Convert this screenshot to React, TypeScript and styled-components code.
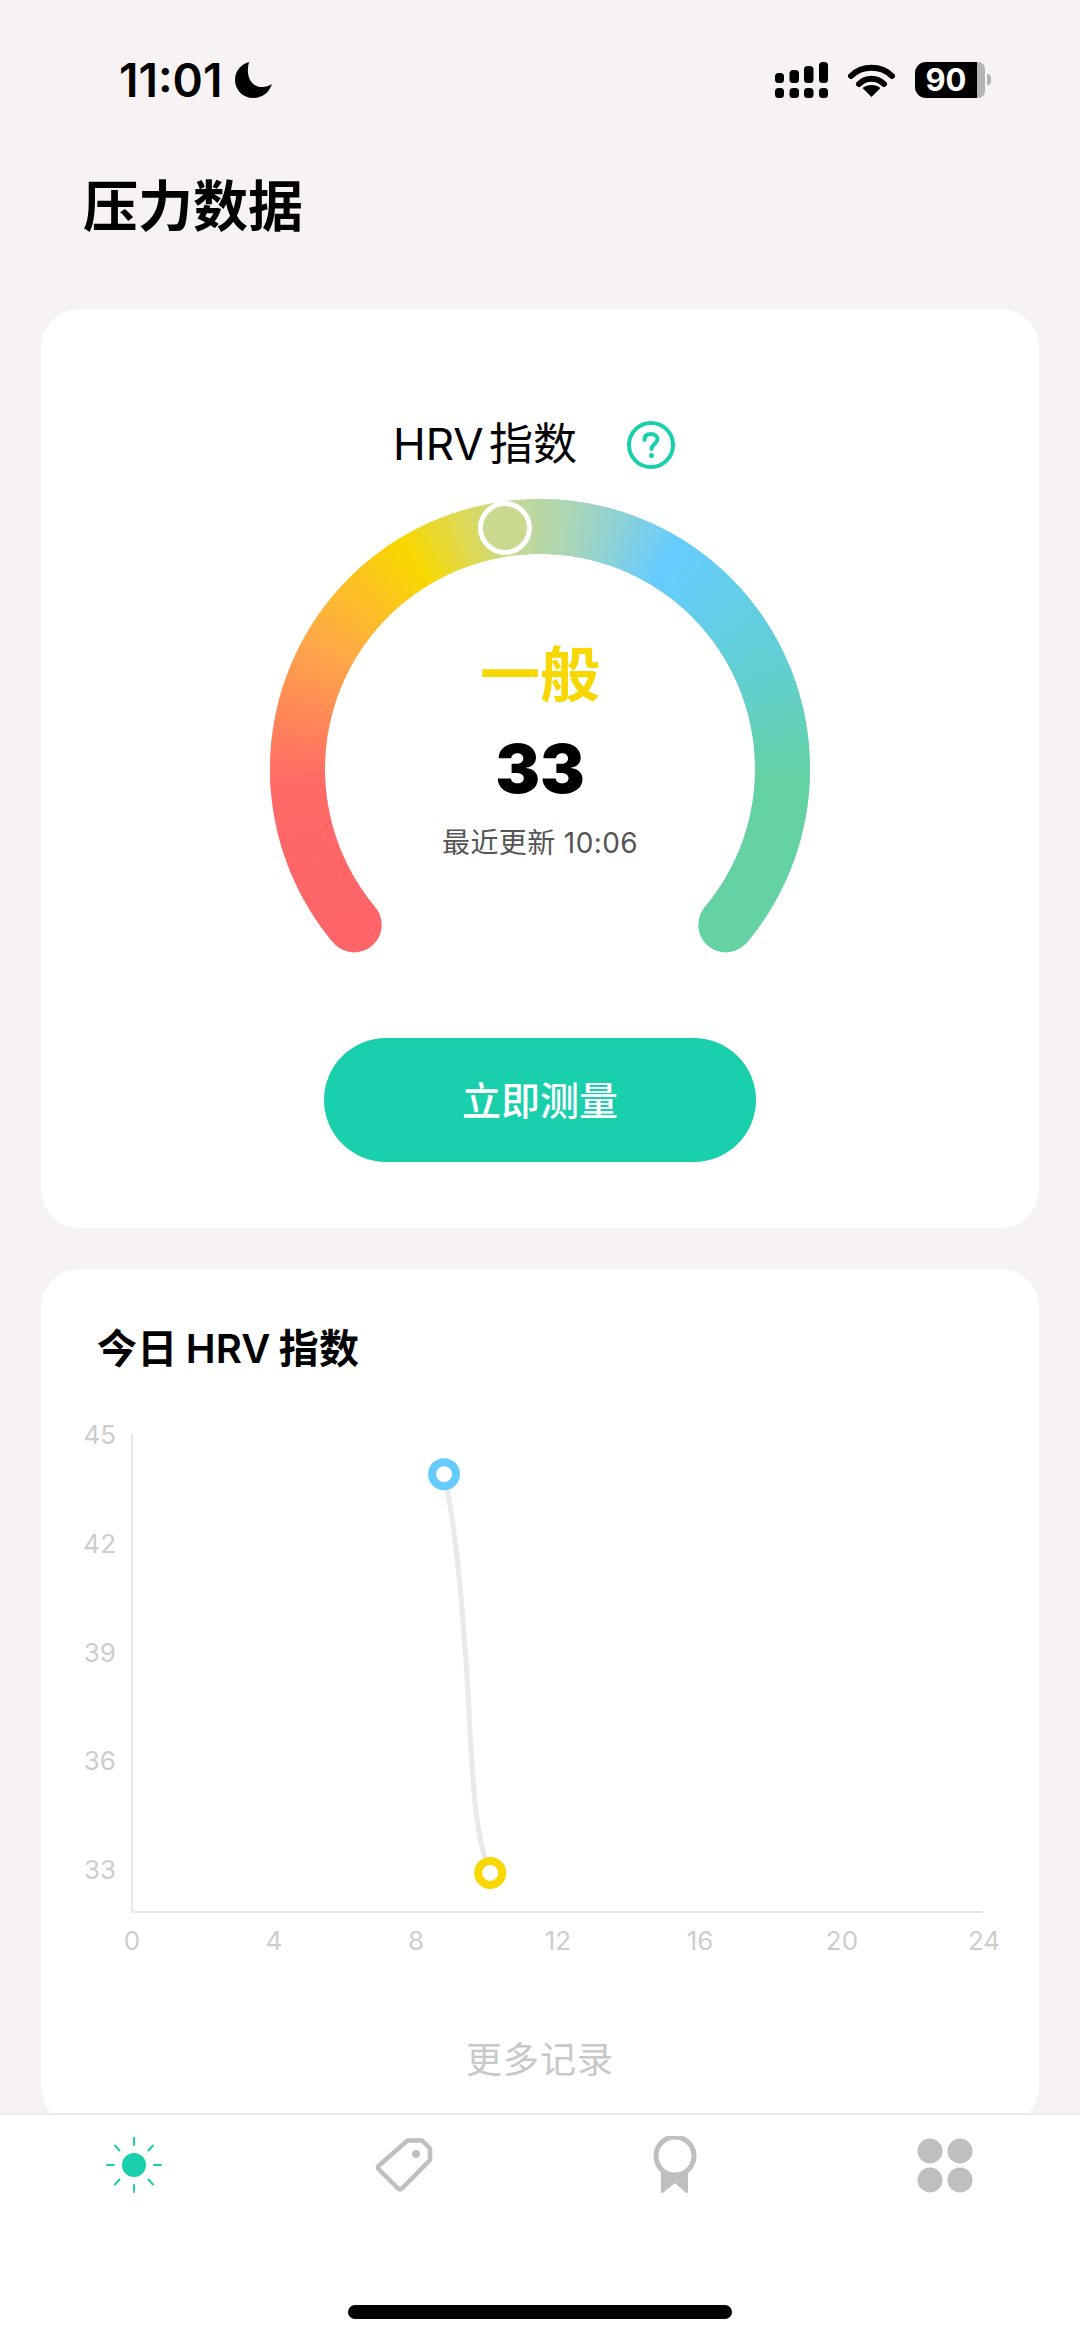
import React, { useMemo } from "react";
import styled, { createGlobalStyle } from "styled-components";

const FONT = `Inter, "Noto Sans CJK SC", "Noto Sans", sans-serif`;
const GREEN = "#1ACFAC";
const GREY = "#BFBFBF";

const GlobalStyle = createGlobalStyle`
  html, body {
    margin: 0;
    padding: 0;
    background: #f7f3f2;
  }
  body {
    font-family: ${FONT};
  }
`;

const Page = styled.div`
  width: 1080px;
  height: 2341px;
  display: flex;
  flex-direction: column;
  overflow: hidden;
  background: #f7f3f2;
`;

const Content = styled.main`
  height: 2113px;
  flex: none;
  overflow: hidden;
`;

// Status bar
const StatusBar = styled.div`
  height: 36px;
  padding: 62px 95px 0 119px;
  display: flex;
  align-items: center;
  justify-content: space-between;
`;

const Clock = styled.div`
  display: flex;
  align-items: center;
  gap: 13px;
`;

const Time = styled.span`
  font-size: 46px;
  font-weight: 600;
  line-height: 36px;
  color: #000;
`;

const StatusIcons = styled.div`
  display: flex;
  align-items: center;
`;

const Battery = styled.div`
  width: 70px;
  height: 36px;
  margin-left: 20px;
  border-radius: 11px 7px 7px 11px;
  background: linear-gradient(90deg, #000 89%, #b4b4b4 89%);
  color: #fff;
  font-size: 31px;
  font-weight: 700;
  line-height: 36px;
  text-align: center;
  padding-right: 8px;
  box-sizing: border-box;
  position: relative;

  &::after {
    content: "";
    position: absolute;
    right: -6px;
    top: 12px;
    width: 4px;
    height: 11px;
    border-radius: 0 4px 4px 0;
    background: #b4b4b4;
  }
`;

const Title = styled.h1`
  margin: 68px 0 0;
  padding-left: 83px;
  font-size: 55px;
  line-height: 80px;
  font-weight: 700;
  color: #000;
`;

const Card = styled.section`
  margin: 0 41px;
  background: #fff;
  border-radius: 38px;
`;

// Gauge card
const GaugeCard = styled(Card)`
  margin-top: 63px;
  padding: 108px 0 66px;
  display: flex;
  flex-direction: column;
  align-items: center;
`;

const GaugeHeader = styled.div`
  height: 56px;
  display: flex;
  align-items: center;
  gap: 50px;
  padding-right: 12px;
`;

const GaugeTitle = styled.span`
  font-size: 44px;
  font-weight: 400;
  line-height: 50px;
  word-spacing: -7px;
  margin-top: -2px;
  color: #000;
`;

const Gauge = styled.div`
  position: relative;
  width: 540px;
  height: 454px;
  margin-top: 26px;
`;

const GaugeText = styled.div`
  position: absolute;
  inset: 0;
  padding-top: 141px;
  display: flex;
  flex-direction: column;
  align-items: center;
`;

const Level = styled.div`
  font-size: 60px;
  line-height: 70px;
  font-weight: 700;
  color: #f8d800;
`;

const Score = styled.div`
  margin-top: 24px;
  font-size: 67px;
  line-height: 70px;
  font-weight: 900;
  color: #000;
`;

const Updated = styled.div`
  margin-top: 21px;
  font-size: 28px;
  line-height: 36px;
  letter-spacing: 0.4px;
  color: #555;
`;

const MeasureButton = styled.button`
  width: 432px;
  height: 124px;
  margin-top: 85px;
  padding: 0 0 4px;
  border: 0;
  border-radius: 62px;
  background: ${GREEN};
  color: #fff;
  font-family: ${FONT};
  font-size: 39px;
  font-weight: 500;
`;

// Trend card
const TrendCard = styled(Card)`
  margin-top: 41px;
  padding: 60px 0 40px;
`;

const TrendTitle = styled.h2`
  margin: 0;
  padding-left: 56px;
  font-size: 40px;
  line-height: 40px;
  font-weight: 600;
  word-spacing: -2px;
  letter-spacing: 0.2px;
  color: #000;
`;

const ChartSvg = styled.svg`
  display: block;
  margin-top: 51px;
`;

const AxisLabel = styled.text`
  font-family: ${FONT};
  font-size: 26px;
  fill: #cdcdcd;
`;

const MoreLink = styled.div`
  margin-top: 75px;
  font-size: 36px;
  line-height: 50px;
  text-align: center;
  letter-spacing: 1px;
  color: #c8c8c8;
`;

// Bottom navigation
const TabBar = styled.nav`
  flex: 1;
  background: #fff;
  border-top: 2px solid #ebebeb;
  display: flex;
  flex-direction: column;
  align-items: center;
`;

const Tabs = styled.div`
  width: 100%;
  padding-top: 21px;
  display: grid;
  grid-template-columns: repeat(4, 1fr);
  justify-items: center;
`;

const TabIcon = styled.svg`
  display: block;
  width: 60px;
  height: 60px;
`;

const HomeIndicator = styled.div`
  width: 384px;
  height: 14px;
  margin-top: auto;
  margin-bottom: 22px;
  border-radius: 7px;
  background: #000;
`;

// Colour stops along the gauge, in degrees clockwise from the top
const GAUGE_STOPS: [number, string][] = [
  [-131, "#ff6568"],
  [-93, "#ff6a66"],
  [-60, "#ffa948"],
  [-31, "#f8d800"],
  [-8, "#c9d98f"],
  [8, "#a8d5b8"],
  [31, "#66ccff"],
  [67, "#62cfd0"],
  [93, "#64d2a2"],
  [131, "#64d2a2"],
];

const hexToRgb = (hex: string) => [
  parseInt(hex.slice(1, 3), 16),
  parseInt(hex.slice(3, 5), 16),
  parseInt(hex.slice(5, 7), 16),
];

const colorAt = (angle: number) => {
  const next = GAUGE_STOPS.findIndex(([a]) => a >= angle);
  if (next <= 0) return GAUGE_STOPS[0][1];
  const [a0, c0] = GAUGE_STOPS[next - 1];
  const [a1, c1] = GAUGE_STOPS[next];
  const t = (angle - a0) / (a1 - a0);
  const from = hexToRgb(c0);
  const to = hexToRgb(c1);
  const mix = from.map((v, i) => Math.round(v + (to[i] - v) * t));
  return `rgb(${mix.join(",")})`;
};

const GAUGE_R = 242.5;
const polar = (angle: number) => {
  const rad = (angle * Math.PI) / 180;
  return { x: 270 + GAUGE_R * Math.sin(rad), y: 270 - GAUGE_R * Math.cos(rad) };
};

const GaugeArc = () => {
  const segments = useMemo(() => {
    const list = [];
    for (let a = -130; a < 130; a += 1) {
      const p0 = polar(a);
      const p1 = polar(a + 1.4);
      list.push({
        key: a,
        d: `M${p0.x} ${p0.y}A${GAUGE_R} ${GAUGE_R} 0 0 1 ${p1.x} ${p1.y}`,
        color: colorAt(a + 0.5),
      });
    }
    return list;
  }, []);
  const start = polar(-130);
  const end = polar(130);

  return (
    <svg width="540" height="454" viewBox="0 0 540 454" style={{ display: "block" }}>
      <circle cx={start.x} cy={start.y} r="27.5" fill={colorAt(-130)} />
      <circle cx={end.x} cy={end.y} r="27.5" fill={colorAt(130)} />
      {segments.map((s) => (
        <path key={s.key} d={s.d} fill="none" stroke={s.color} strokeWidth="55" />
      ))}
      <circle cx="235" cy="29" r="24.5" fill="#c9d98f" stroke="#fff" strokeWidth="5" />
    </svg>
  );
};

// Hours on x, HRV on y; pixel scale of the chart drawing
const xOf = (hour: number) => 91 + hour * 35.5;
const yOf = (value: number) => 450 - (value - 33) * 36.25;

const Y_TICKS = [45, 42, 39, 36, 33];
const X_TICKS = [0, 4, 8, 12, 16, 20, 24];
const POINTS = [
  { hour: 8.79, value: 43.92, color: "#66ccff" },
  { hour: 10.09, value: 32.92, color: "#f8d800" },
];

const TrendChart = () => (
  <ChartSvg width="998" height="540" viewBox="0 0 998 540">
    <path d="M91 14V492H942" fill="none" stroke="#e8e8e8" strokeWidth="2" />
    {Y_TICKS.map((v) => (
      <AxisLabel key={v} x="75" y={yOf(v) + 9} textAnchor="end">
        {v}
      </AxisLabel>
    ))}
    {X_TICKS.map((h) => (
      <AxisLabel key={h} x={xOf(h)} y="530" textAnchor="middle">
        {h}
      </AxisLabel>
    ))}
    <path
      d="M403 54C416 110 423 200 428 290C432 370 435 420 449 452"
      fill="none"
      stroke="#e9e9e9"
      strokeWidth="5"
    />
    {POINTS.map((p) => (
      <circle
        key={p.hour}
        cx={xOf(p.hour)}
        cy={yOf(p.value)}
        r="12"
        fill="#fff"
        stroke={p.color}
        strokeWidth="8"
      />
    ))}
  </ChartSvg>
);

const SunIcon = () => (
  <TabIcon viewBox="0 0 60 60">
    <circle cx="29" cy="29" r="12" fill={GREEN} />
    <g stroke={GREEN} strokeWidth="2" strokeLinecap="round">
      <path d="M29 2v7M29 49v7M2 29h7M49 29h7" />
      <path d="M10 9.5l4.5 5M48 9.5l-4.5 5M10 48.5l4.5-5M48 48.5l-4.5-5" />
    </g>
  </TabIcon>
);

const TagIcon = () => (
  <TabIcon viewBox="0 0 60 60">
    <path
      d="M32.5 4.5H47L55 12.500V24L27 52.500Q25 54.500 23 52.500L4 33.500Q2 31.500 4 29.500Z"
      fill="none"
      stroke={GREY}
      strokeWidth="4.500"
      strokeLinejoin="round"
    />
    <circle cx="41" cy="18" r="4" fill={GREY} />
  </TabIcon>
);

const MedalIcon = () => (
  <TabIcon viewBox="0 0 60 60">
    <path d="M16 32H43V56Q42 58 40 56L30 47L19 56Q17 58 16 56Z" fill={GREY} />
    <circle cx="30" cy="20" r="19" fill="#fff" stroke={GREY} strokeWidth="5" />
  </TabIcon>
);

const GridIcon = () => (
  <TabIcon viewBox="0 0 60 60">
    <g fill={GREY}>
      <circle cx="15" cy="15" r="12.500" />
      <circle cx="45" cy="15" r="12.500" />
      <circle cx="15" cy="44" r="12.500" />
      <circle cx="45" cy="44" r="12.500" />
    </g>
  </TabIcon>
);

const MoonIcon = () => (
  <svg width="37" height="36" viewBox="0 0 37 36">
    <path d="M14 0C7 2 0 8 0 18C0 28 8 36 18 36C27 36 34 31 37 22C34 24 31 25 27 25C17 25 10 15 14 0Z" fill="#000" />
  </svg>
);

const SignalIcon = () => (
  <svg width="53" height="36" viewBox="0 0 53 36">
    <g fill="#000">
      <rect x="0" y="11" width="9" height="10" rx="3.500" />
      <rect x="14.500" y="8" width="9.500" height="13" rx="3.500" />
      <rect x="29" y="4" width="9.500" height="17" rx="3.500" />
      <rect x="44" y="0" width="9" height="21" rx="3.500" />
      <rect x="0" y="26" width="9" height="10" rx="3.500" />
      <rect x="14.500" y="26" width="9.500" height="10" rx="3.500" />
      <rect x="29" y="26" width="9.500" height="10" rx="3.500" />
      <rect x="44" y="26" width="9" height="10" rx="3.500" />
    </g>
  </svg>
);

const WifiIcon = () => (
  <svg width="47" height="36" viewBox="0 0 47 36" style={{ marginLeft: 20 }}>
    <path d="M3 14C14 3 33 3 44 14" fill="none" stroke="#000" strokeWidth="6" strokeLinecap="round" />
    <path d="M11 22C18 15 29 15 36 22" fill="none" stroke="#000" strokeWidth="6" strokeLinecap="round" />
    <path d="M23.500 35L14.500 26C19 22 28 22 32.500 26Z" fill="#000" />
  </svg>
);

const QuestionIcon = () => (
  <svg width="48" height="48" viewBox="0 0 48 48">
    <circle cx="24" cy="24" r="22" fill="none" stroke={GREEN} strokeWidth="4" />
    <path
      d="M17.500 19C17.500 15 20 13 24 13C28 13 30.500 15.500 30.500 18.500C30.500 22.500 24.500 23 24.500 28"
      fill="none"
      stroke={GREEN}
      strokeWidth="4"
      strokeLinecap="round"
    />
    <circle cx="24.500" cy="34.500" r="2.500" fill={GREEN} />
  </svg>
);

const App = () => (
  <Page>
    <GlobalStyle />
    <Content>
      <StatusBar>
        <Clock>
          <Time>11:01</Time>
          <MoonIcon />
        </Clock>
        <StatusIcons>
          <SignalIcon />
          <WifiIcon />
          <Battery>90</Battery>
        </StatusIcons>
      </StatusBar>
      <Title>压力数据</Title>

      <GaugeCard>
        <GaugeHeader>
          <GaugeTitle>HRV 指数</GaugeTitle>
          <QuestionIcon />
        </GaugeHeader>
        <Gauge>
          <GaugeArc />
          <GaugeText>
            <Level>一般</Level>
            <Score>33</Score>
            <Updated>最近更新 10:06</Updated>
          </GaugeText>
        </Gauge>
        <MeasureButton>立即测量</MeasureButton>
      </GaugeCard>

      <TrendCard>
        <TrendTitle>今日 HRV 指数</TrendTitle>
        <TrendChart />
        <MoreLink>更多记录</MoreLink>
      </TrendCard>
    </Content>

    <TabBar>
      <Tabs>
        <SunIcon />
        <TagIcon />
        <MedalIcon />
        <GridIcon />
      </Tabs>
      <HomeIndicator />
    </TabBar>
  </Page>
);

export default App;
